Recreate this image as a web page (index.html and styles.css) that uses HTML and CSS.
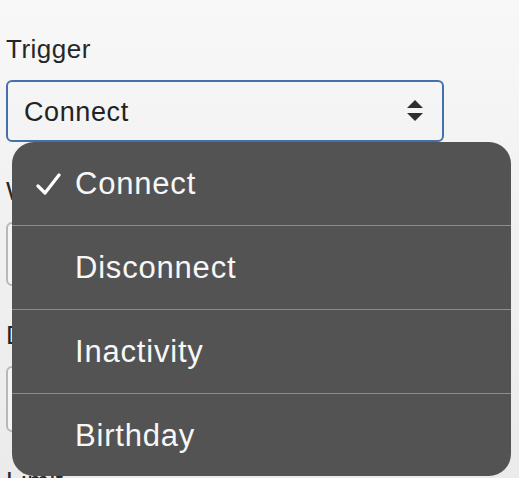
FILE: index.html
```html
<!DOCTYPE html>
<html lang="en">
<head>
<meta charset="utf-8">
<title>Trigger</title>
<link rel="stylesheet" href="styles.css">
</head>
<body>
<main class="form">
  <div class="field">
    <div class="label">Trigger</div>
    <div class="select select--active">
      <span class="select-value">Connect</span>
      <svg class="select-arrows" width="16" height="22" viewBox="0 0 16 22" aria-hidden="true">
        <path d="M8 0 L16 8 L0 8 Z" fill="#2e2e2e"/>
        <path d="M0 13 L16 13 L8 21 Z" fill="#2e2e2e"/>
      </svg>
    </div>
  </div>
  <div class="field">
    <div class="label">Wait</div>
    <div class="input input--m"></div>
  </div>
  <div class="field">
    <div class="label">Delay</div>
    <div class="input input--l"></div>
  </div>
  <div class="field">
    <div class="label">Limit</div>
  </div>

  <ul class="menu">
    <li class="menu-item menu-item--checked">
      <svg class="check" width="26" height="24" viewBox="0 0 26 24" aria-hidden="true">
        <polyline points="2,14 9,21 23,3" fill="none" stroke="#ffffff" stroke-width="3.2" stroke-linecap="round" stroke-linejoin="round"/>
      </svg>
      <span>Connect</span>
    </li>
    <li class="menu-item"><span>Disconnect</span></li>
    <li class="menu-item"><span>Inactivity</span></li>
    <li class="menu-item"><span>Birthday</span></li>
  </ul>
</main>
</body>
</html>
```

FILE: styles.css
```css
html, body {
  margin: 0;
  padding: 0;
}

body {
  width: 519px;
  height: 478px;
  overflow: hidden;
  background: linear-gradient(to bottom, #f8f8f8 0%, #f1f1f1 45%, #ebebeb 100%);
  font-family: "Liberation Sans", Arial, sans-serif;
  color: #222222;
}

.form {
  position: relative;
  padding: 34px 75px 0 6px;
  display: flex;
  flex-direction: column;
  gap: 34px;
}

.field {
  display: flex;
  flex-direction: column;
  gap: 16px;
}

.label {
  font-size: 26px;
  letter-spacing: 0.5px;
  line-height: 30px;
  height: 30px;
  color: #262626;
}

.select {
  box-sizing: border-box;
  height: 62px;
  width: 438px;
  border: 2px solid #4372aa;
  border-radius: 6px;
  display: flex;
  align-items: center;
  justify-content: space-between;
  padding: 2px 19px 0 16px;
}

.select-value {
  font-size: 27px;
  letter-spacing: 0.6px;
  line-height: 27px;
  color: #222222;
}

.select-arrows {
  display: block;
  margin-top: -2px;
}

.input {
  box-sizing: border-box;
  width: 438px;
  border: 2px solid #b8b8b8;
  border-radius: 6px;
  background: #f4f4f4;
}

.input--m {
  height: 64px;
}

.input--l {
  height: 66px;
}

.menu {
  position: absolute;
  left: 12px;
  top: 142px;
  width: 499px;
  margin: 0;
  padding: 0;
  list-style: none;
  background: #535353;
  border-radius: 22px;
  overflow: hidden;
}

.menu-item {
  height: 83px;
  display: flex;
  align-items: center;
  padding-left: 63px;
  position: relative;
  font-size: 31px;
  letter-spacing: 0.8px;
  line-height: 31px;
  color: #f7f7f7;
}

.menu-item + .menu-item {
  border-top: 1px solid #8c8c8c;
}

.menu-item:last-child {
  height: 82px;
}

.check {
  position: absolute;
  left: 24px;
  top: 30px;
}
```
